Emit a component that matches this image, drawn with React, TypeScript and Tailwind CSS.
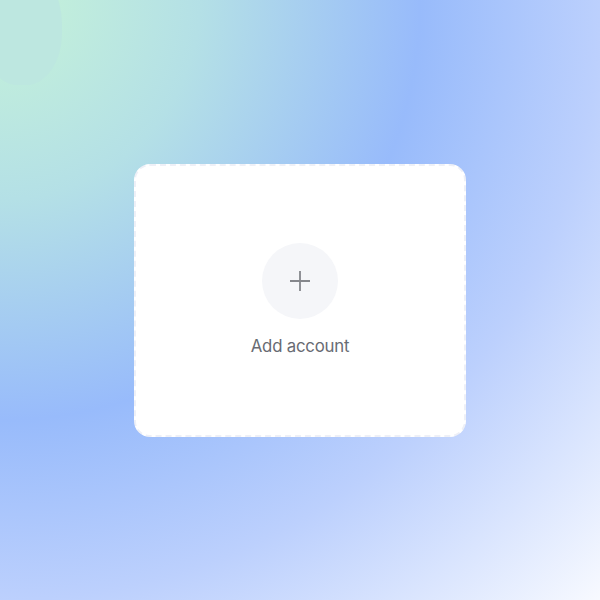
export default function App() {
  return (
    <div
      className="relative min-h-screen w-full overflow-hidden flex items-center justify-center bg-[radial-gradient(circle_at_0_0,#c6f3d8_0px,#b4e0e6_200px,#98bbfb_420px,#bcd0fd_600px,#f8faff_850px)]"
      style={{ fontFamily: 'Inter, "Noto Sans", sans-serif' }}
    >
      {/* faint blob in the corner */}
      <div className="absolute -left-[18px] -top-[28px] w-[80px] h-[113px] rounded-[45%] bg-[#bde7e0]" />

      {/* Add account card */}
      <button className="relative w-[332px] h-[273px] rounded-2xl bg-white border-2 border-dashed border-[#eef0f7] flex flex-col items-center justify-center gap-4">
        <div className="w-[76px] h-[76px] rounded-full bg-[#f5f6f9] flex items-center justify-center">
          <svg width="20" height="20" viewBox="0 0 20 20" fill="none" stroke="#85878c" strokeWidth="1.8">
            <path d="M10 0v20M0 10h20" />
          </svg>
        </div>
        <span className="text-[16.8px] leading-[22px] text-[#686b73] tracking-[-0.2px]">Add account</span>
      </button>
    </div>
  );
}
